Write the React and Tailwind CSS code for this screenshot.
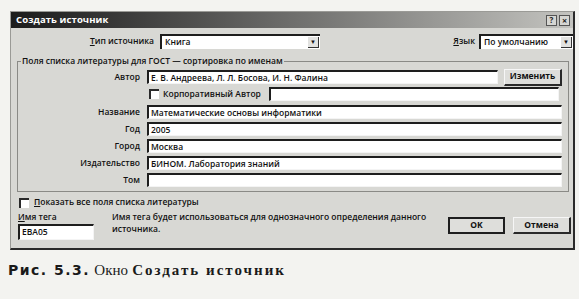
import React from 'react';

const ui = { fontFamily: '"Open Sans", "Noto Sans", "Liberation Sans", sans-serif' };
const serif = { fontFamily: '"Liberation Serif", "DejaVu Serif", serif' };

// sunken text field as in classic Windows dialogs
const Field = ({ value = '', className = '' }) => (
  <div
    className={`h-[14px] shrink-0 bg-white border-t-2 border-l-2 border-[#1e1e1e] border-b border-r border-b-[#f4f4f4] border-r-[#f4f4f4] pl-[2px] text-[8.5px] leading-[11px] font-semibold text-[#111] whitespace-nowrap overflow-hidden ${className}`}
  >
    {value}
  </div>
);

const Combo = ({ value, className = '' }) => (
  <div
    className={`h-[15px] shrink-0 bg-white border-t-2 border-l-2 border-[#1e1e1e] flex items-center justify-between pl-[3px] ${className}`}
  >
    <span className="text-[8.5px] font-semibold text-[#111] whitespace-nowrap">{value}</span>
    <span className="w-[11px] h-[11px] mr-[1px] bg-[#e2e2e0] border-b border-r border-[#333] flex items-center justify-center text-[6px] leading-none text-[#111]">
      ▼
    </span>
  </div>
);

const Button = ({ children, primary, className = '' }) => (
  <div
    className={`h-[17px] shrink-0 bg-[#dededb] flex items-center justify-center text-[8.5px] font-bold text-[#111] ${
      primary
        ? 'border-2 border-[#1e1e1e]'
        : 'border border-t-[#f6f6f6] border-l-[#f6f6f6] border-b-2 border-r-2 border-b-[#2a2a2a] border-r-[#2a2a2a]'
    } ${className}`}
  >
    {children}
  </div>
);

const Check = () => (
  <span className="inline-block w-[10px] h-[10px] bg-white border-t-2 border-l-2 border-[#2a2a2a] shrink-0" />
);

const label = 'text-[8.5px] font-semibold text-[#111] whitespace-nowrap';

const rows = [
  ['Название', 'Математические основы информатики'],
  ['Год', '2005'],
  ['Город', 'Москва'],
  ['Издательство', 'БИНОМ. Лаборатория знаний'],
  ['Том', ''],
];

export default function App() {
  return (
    <div className="w-[579px] h-[299px] bg-[#f3f3f0] pt-[11px] pl-[10px] overflow-hidden" style={ui}>
      {/* dialog */}
      <div className="w-[565px] h-[239px] bg-[#d8d8d4] border-l border-t border-[#9a9a96] border-r-2 border-b-2 border-r-[#2a2a2a] border-b-[#2a2a2a] flex flex-col">
        {/* title bar */}
        <div className="h-[16px] bg-gradient-to-r from-[#1c1c1c] via-[#6e6e6c] to-[#c4c4c0] flex items-center justify-between pl-[5px] pr-[3px]">
          <span className="text-[9.5px] font-bold text-white tracking-[0.1px]">Создать источник</span>
          <div className="flex gap-[2px]">
            <span className="w-[11px] h-[11px] bg-[#d6d6d2] border border-[#555] flex items-center justify-center text-[8px] font-bold leading-none text-[#222]">?</span>
            <span className="w-[11px] h-[11px] bg-[#d6d6d2] border border-[#555] flex items-center justify-center text-[9px] font-bold leading-none text-[#222]">×</span>
          </div>
        </div>

        {/* body */}
        <div className="flex-1 flex flex-col pt-[6px] px-[6px]">
          {/* source type + language */}
          <div className="flex items-center h-[15px]">
            <span className={`w-[143px] text-right pr-[6px] ${label}`}>
              <span className="underline">Т</span>ип источника
            </span>
            <Combo value="Книга" className="w-[160px]" />
            <span className={`ml-auto mr-[4px] ${label}`}>
              <span className="underline">Я</span>зык
            </span>
            <Combo value="По умолчанию" className="w-[94px] mr-[-6px]" />
          </div>

          {/* group box */}
          <fieldset className="mt-[7px] w-[552px] h-[136px] border border-[#8a8a86] pl-0 pr-[5px] pt-[3px] pb-0">
            <legend className={`ml-[3px] px-[1px] leading-[10px] ${label}`}>
              Поля списка литературы для ГОСТ — сортировка по именам
            </legend>
            <div className="flex items-center h-[16px]">
              <span className={`w-[129px] text-right pr-[7px] ${label}`}>Автор</span>
              <Field value="Е. В. Андреева, Л. Л. Босова, И. Н. Фалина" className="w-[351px]" />
              <Button className="w-[58px] ml-[6px]">Изменить</Button>
            </div>
            <div className="flex items-center h-[16px] mt-[1px]">
              <span className="w-[131px] shrink-0" />
              <Check />
              <span className={`ml-[4px] ${label}`}>Корпоративный Автор</span>
              <Field className="ml-[8px] w-[290px]" />
            </div>
            <div className="flex flex-col gap-[3px] mt-[3px]">
              {rows.map(([name, value]) => (
                <div key={name} className="flex items-center h-[14px]">
                  <span className={`w-[129px] text-right pr-[7px] ${label}`}>{name}</span>
                  <Field value={value} className="w-[415px]" />
                </div>
              ))}
            </div>
          </fieldset>

          {/* show all */}
          <div className="flex items-center mt-[5px] ml-[2px] h-[11px]">
            <Check />
            <span className={`ml-[5px] ${label}`}>
              <span className="underline">П</span>оказать все поля списка литературы
            </span>
          </div>

          {/* tag + buttons */}
          <div className="flex mt-[3px]">
            <div className="flex flex-col w-[76px] ml-[1px]">
              <span className={`leading-[11px] ${label}`}>
                <span className="underline">И</span>мя тега
              </span>
              <Field value="EBA05" className="mt-[2px] h-[16px]" />
            </div>
            <p className="ml-[18px] w-[320px] text-[8.5px] font-semibold text-[#111] leading-[12px]">
              Имя тега будет использоваться для однозначного определения данного источника.
            </p>
            <div className="ml-auto flex gap-[8px] mt-[6px] mr-[-4px]">
              <Button primary className="w-[57px]">OK</Button>
              <Button className="w-[58px]">Отмена</Button>
            </div>
          </div>
        </div>
      </div>

      {/* caption */}
      <p className="mt-[10px] ml-[-2px] leading-[18px] text-[#1a1a1a] whitespace-nowrap">
        <span className="text-[14px] font-black tracking-[1.5px]" style={{ fontFamily: '"DejaVu Sans", sans-serif' }}>
          Рис. 5.3.
        </span>{' '}
        <span style={serif} className="text-[15px]">Окно</span>{' '}
        <span style={serif} className="text-[15px] font-bold tracking-[2px]">Создать источник</span>
      </p>
    </div>
  );
}
